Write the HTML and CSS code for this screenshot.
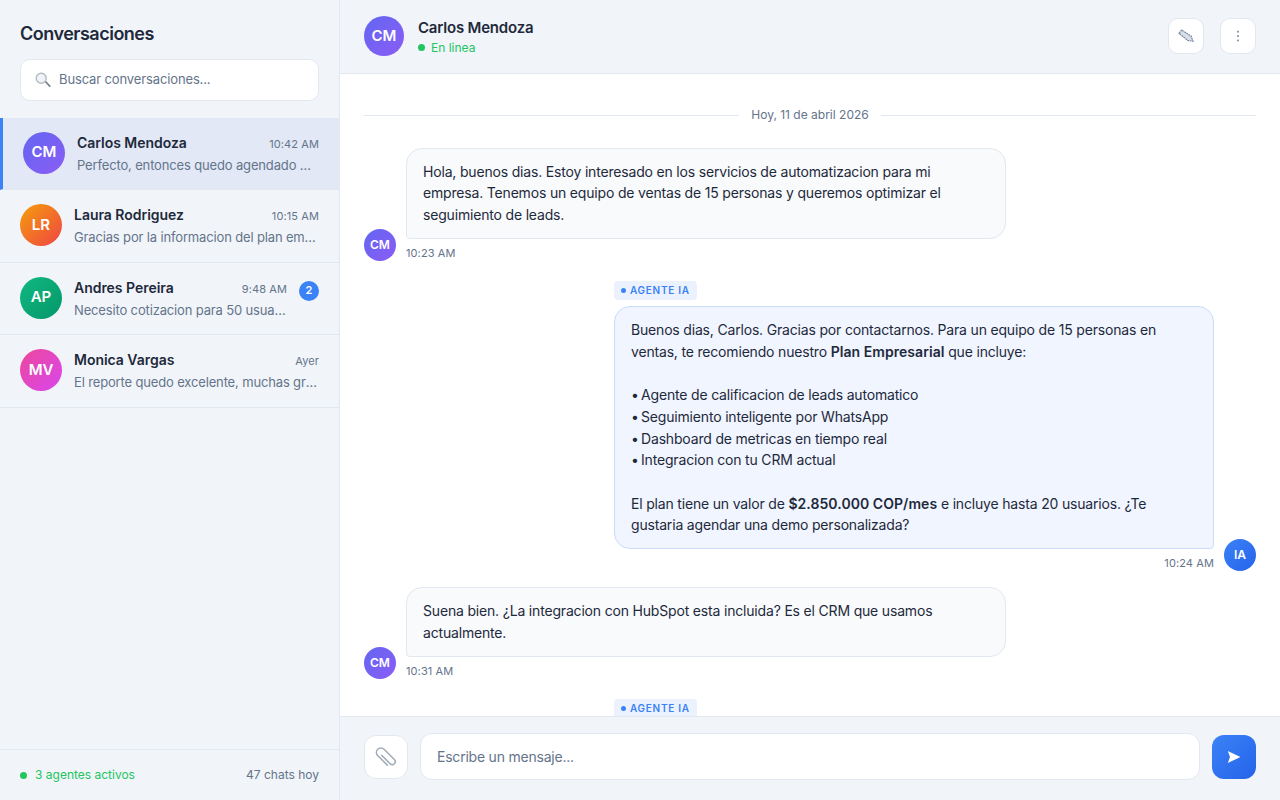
FILE: index.html
```html
<!DOCTYPE html>
<html lang="es">
<head>
    <meta charset="UTF-8" />
    <meta name="viewport" content="width=device-width, initial-scale=1.0"/>
    <title>Conversaciones</title>
    <link rel="stylesheet" href="styles.css">
</head>
<body>
    <!-- ===== SIDEBAR ===== -->
    <aside class="sidebar">
        <div class="sidebar-head">
            <h2>Conversaciones</h2>
            <label class="search">
                <svg class="search-icon" viewBox="0 0 16 16" width="16" height="16">
                    <path d="M9.6 9.9l1.2-1.2 4.6 4.7q.6.7 0 1.3t-1.3 0z" fill="#7f858c"/>
                    <circle cx="6.2" cy="6.2" r="5" fill="#f0f4f8" stroke="#b5bac0" stroke-width="1.4"/>
                </svg>
                <input type="text" placeholder="Buscar conversaciones...">
            </label>
        </div>

        <div class="conv-list">
            <div class="conv active">
                <div class="avatar av-purple">CM</div>
                <div class="conv-body">
                    <div class="conv-top"><span class="conv-name">Carlos Mendoza</span><span class="conv-time">10:42 AM</span></div>
                    <div class="conv-preview">Perfecto, entonces quedo agendado martes a las 3</div>
                </div>
            </div>
            <div class="conv">
                <div class="avatar av-orange">LR</div>
                <div class="conv-body">
                    <div class="conv-top"><span class="conv-name">Laura Rodriguez</span><span class="conv-time">10:15 AM</span></div>
                    <div class="conv-preview">Gracias por la informacion del plan empresarial</div>
                </div>
            </div>
            <div class="conv">
                <div class="avatar av-green">AP</div>
                <div class="conv-body">
                    <div class="conv-top"><span class="conv-name">Andres Pereira</span><span class="conv-time">9:48 AM</span></div>
                    <div class="conv-preview">Necesito cotizacion para 50 usuarios nuevos</div>
                </div>
                <span class="badge">2</span>
            </div>
            <div class="conv">
                <div class="avatar av-pink">MV</div>
                <div class="conv-body">
                    <div class="conv-top"><span class="conv-name">Monica Vargas</span><span class="conv-time">Ayer</span></div>
                    <div class="conv-preview">El reporte quedo excelente, muchas gracias por todo</div>
                </div>
            </div>
        </div>

        <div class="sidebar-foot">
            <span class="agents"><i class="dot"></i>3 agentes activos</span>
            <span>47 chats hoy</span>
        </div>
    </aside>

    <!-- ===== CHAT ===== -->
    <main class="chat">
        <header class="chat-head">
            <div class="avatar avatar-head av-purple">CM</div>
            <div class="chat-who">
                <div class="chat-name">Carlos Mendoza</div>
                <div class="chat-status"><i class="dot dot-small"></i>En linea</div>
            </div>
            <div class="chat-actions">
                <button class="icon-btn" aria-label="Editar">
                    <svg viewBox="0 0 16 16" width="16" height="16">
                        <path d="M1 5.4L3.6 2l9.6 6.2 1.8 5-5.2-.7z" fill="#d8dee7" stroke="#74829a" stroke-width="1.2" stroke-dasharray="1.8 .7"/>
                    </svg>
                </button>
                <button class="icon-btn" aria-label="Opciones">
                    <svg viewBox="0 0 16 16" width="16" height="16" fill="#74829a">
                        <rect x="7.2" y="2.8" width="1.6" height="1.8"/><rect x="7.2" y="7.2" width="1.6" height="1.8"/><rect x="7.2" y="11.6" width="1.6" height="1.8"/>
                    </svg>
                </button>
            </div>
        </header>

        <div class="messages">
            <div class="date-sep"><span>Hoy, 11 de abril 2026</span></div>

            <div class="msg">
                <div class="avatar avatar-small av-purple">CM</div>
                <div class="msg-col">
                    <div class="bubble">Hola, buenos dias. Estoy interesado en los servicios de automatizacion para mi empresa. Tenemos un equipo de ventas de 15 personas y queremos optimizar el seguimiento de leads.</div>
                    <div class="msg-time">10:23 AM</div>
                </div>
            </div>

            <div class="msg msg-agent">
                <div class="msg-col">
                    <span class="agent-tag"><i class="tag-dot"></i>AGENTE IA</span>
                    <div class="bubble">Buenos dias, Carlos. Gracias por contactarnos. Para un equipo de 15 personas en ventas, te recomiendo nuestro <strong>Plan Empresarial</strong> que incluye:<br><br><span class="bullet">•</span> Agente de calificacion de leads automatico<br><span class="bullet">•</span> Seguimiento inteligente por WhatsApp<br><span class="bullet">•</span> Dashboard de metricas en tiempo real<br><span class="bullet">•</span> Integracion con tu CRM actual<br><br>El plan tiene un valor de <strong>$2.850.000 COP/mes</strong> e incluye hasta 20 usuarios. ¿Te gustaria agendar una demo personalizada?</div>
                    <div class="msg-time">10:24 AM</div>
                </div>
                <div class="avatar avatar-small av-blue">IA</div>
            </div>

            <div class="msg">
                <div class="avatar avatar-small av-purple">CM</div>
                <div class="msg-col">
                    <div class="bubble">Suena bien. ¿La integracion con HubSpot esta incluida? Es el CRM que usamos actualmente.</div>
                    <div class="msg-time">10:31 AM</div>
                </div>
            </div>

            <div class="msg msg-agent">
                <div class="msg-col">
                    <span class="agent-tag"><i class="tag-dot"></i>AGENTE IA</span>
                    <div class="bubble">Si, la integracion con HubSpot esta incluida en el Plan Empresarial.</div>
                    <div class="msg-time">10:32 AM</div>
                </div>
                <div class="avatar avatar-small av-blue">IA</div>
            </div>
        </div>

        <footer class="composer">
            <button class="attach" aria-label="Adjuntar">
                <svg viewBox="0 0 24 24" width="24" height="24" fill="none" stroke="#a0abb7" stroke-width="1.5" stroke-linecap="round">
                    <path transform="rotate(-45 11.5 12)" d="M10 8V20a3 3 0 0 0 6 0V5.5a4.5 4.5 0 0 0-9 0V19"/>
                </svg>
            </button>
            <input class="composer-input" type="text" placeholder="Escribe un mensaje...">
            <button class="send" aria-label="Enviar">
                <svg viewBox="0 0 14 14" width="14" height="14"><path d="M.8 1l12.6 6-12.6 6 2.2-6z" fill="#fff"/></svg>
            </button>
        </footer>
    </main>
</body>
</html>
```

FILE: styles.css
```css
*{box-sizing:border-box;}
body{
    display:flex;height:100vh;margin:0;overflow:hidden;background:#fff;
    font-family:Inter,"Noto Sans",sans-serif;line-height:1.5;color:#1e293b;
}
button{padding:0;cursor:pointer;font:inherit;}
input{font:inherit;color:#1e293b;outline:none;}
input::placeholder{color:#64748b;opacity:1;}

/* Avatares */
.avatar{
    flex:none;display:flex;align-items:center;justify-content:center;
    width:42px;height:42px;border-radius:50%;
    color:#fff;font-size:15px;font-weight:600;
}
.avatar-head{width:40px;height:40px;}
.avatar-small{width:32px;height:32px;font-size:12px;}
.av-purple{background:linear-gradient(135deg,#6366f1,#8b5cf6);}
.av-orange{background:linear-gradient(135deg,#f59e0b,#ef4444);}
.av-green{background:linear-gradient(135deg,#10b981,#059669);}
.av-pink{background:linear-gradient(135deg,#ec4899,#d946ef);}
.av-blue{background:linear-gradient(135deg,#3b82f6,#2563eb);}

.dot{display:inline-block;width:7px;height:7px;border-radius:50%;background:#22c55e;margin-right:8px;}
.dot-small{width:7px;height:7px;margin-right:6px;}

/* Sidebar */
.sidebar{
    flex:none;width:340px;display:flex;flex-direction:column;
    background:#f1f5f9;border-right:1px solid #e2e8f0;
}
.sidebar-head{padding:20px 20px 16.5px;}
.sidebar-head h2{margin:0 0 12px;font-size:18px;font-weight:600;line-height:27px;letter-spacing:-.5px;}
.search{
    display:flex;align-items:center;gap:8px;height:42px;padding:0 14px;
    background:#fff;border:1px solid #e2e8f0;border-radius:10px;
}
.search-icon{flex:none;}
.search input{flex:1;min-width:0;border:0;padding:0;background:none;font-size:13px;letter-spacing:-.13px;}

.conv-list{flex:1;}
.conv{
    display:flex;align-items:flex-start;gap:12px;padding:14px 20px;
    border-bottom:1px solid #e2e8f0;
}
.conv.active{background:#e2e8f5;border-left:3px solid #3b82f6;}
.conv-body{flex:1;min-width:0;}
.conv-top{display:flex;justify-content:space-between;align-items:baseline;margin-bottom:3px;}
.conv-name{font-size:14px;font-weight:600;letter-spacing:-.03px;}
.conv-time{font-size:11px;color:#64748b;letter-spacing:.1px;}
.conv-preview{
    font-size:13px;color:#64748b;letter-spacing:-.15px;
    white-space:nowrap;overflow:hidden;text-overflow:ellipsis;
}
.badge{
    flex:none;display:flex;align-items:center;justify-content:center;
    width:20px;height:20px;margin-top:4px;border-radius:50%;
    background:#3b82f6;color:#fff;font-size:11px;font-weight:600;
}

.sidebar-foot{
    display:flex;justify-content:space-between;align-items:center;
    padding:16px 20px;border-top:1px solid #e2e8f0;
    font-size:12px;color:#64748b;
}
.agents{color:#22c55e;}

/* Chat */
.chat{flex:1;min-width:0;display:flex;flex-direction:column;}
.chat-head{
    flex:none;display:flex;align-items:center;gap:14px;padding:16px 24px;
    background:#f1f5f9;border-bottom:1px solid #e2e8f0;
}
.chat-who{flex:1;}
.chat-name{font-size:15px;font-weight:600;line-height:24px;margin-bottom:-1.5px;letter-spacing:-.2px;}
.chat-status{display:flex;align-items:center;font-size:12px;color:#22c55e;}
.chat-actions{display:flex;gap:16px;}
.icon-btn{
    display:flex;align-items:center;justify-content:center;
    width:36px;height:36px;background:#fff;
    border:1px solid #e2e8f0;border-radius:10px;
}

.messages{
    flex:1;min-height:0;overflow:hidden;display:flex;flex-direction:column;gap:16px;
    padding:24px;
}
.date-sep{
    flex:none;display:flex;align-items:center;gap:12px;margin:8.5px 0 7.5px;
    font-size:12px;color:#64748b;
}
.date-sep::before,.date-sep::after{content:"";flex:1;height:1px;background:#e2e8f0;}

.msg{flex:none;display:flex;align-items:flex-end;gap:10px;}
.msg-agent{justify-content:flex-end;}
.msg-col{width:600px;}
.bubble{
    padding:12px 16px;font-size:14px;line-height:1.55;letter-spacing:-.18px;
    background:#f8fafc;border:1px solid #e2e8f0;
    border-radius:16px 16px 16px 4px;
}
.bubble strong{font-weight:600;letter-spacing:.05px;}
.bullet{letter-spacing:-1.6px;}
.msg-agent .bubble{
    background:#f0f5ff;border-color:#c9dcfb;
    border-radius:16px 16px 4px 16px;
}
.msg-time{margin-top:6px;font-size:11px;color:#64748b;letter-spacing:.1px;}
.msg-agent .msg-time{text-align:right;}
.agent-tag{
    display:flex;align-items:center;width:fit-content;gap:4px;
    margin:4px 0 6px;padding:2px 7px;border-radius:4px;
    background:#ebf2fe;color:#3b82f6;
    font-size:10px;font-weight:600;letter-spacing:.72px;
}
.tag-dot{width:5px;height:5px;border-radius:50%;background:#3b82f6;}

.composer{
    flex:none;display:flex;align-items:center;gap:12px;padding:16px 24px 20px;
    background:#f1f5f9;border-top:1px solid #e2e8f0;
}
.attach{
    flex:none;display:flex;align-items:center;justify-content:center;
    width:44px;height:44px;background:#fff;
    border:1px solid #e2e8f0;border-radius:12px;
}
.composer-input{
    flex:1;min-width:0;height:47px;padding:0 16px;font-size:14px;letter-spacing:-.22px;
    background:#fff;border:1px solid #e2e8f0;border-radius:12px;
}
.send{
    flex:none;display:flex;align-items:center;justify-content:center;
    width:44px;height:44px;border:0;border-radius:12px;
    background:linear-gradient(135deg,#3b82f6,#2563eb);
}
```
